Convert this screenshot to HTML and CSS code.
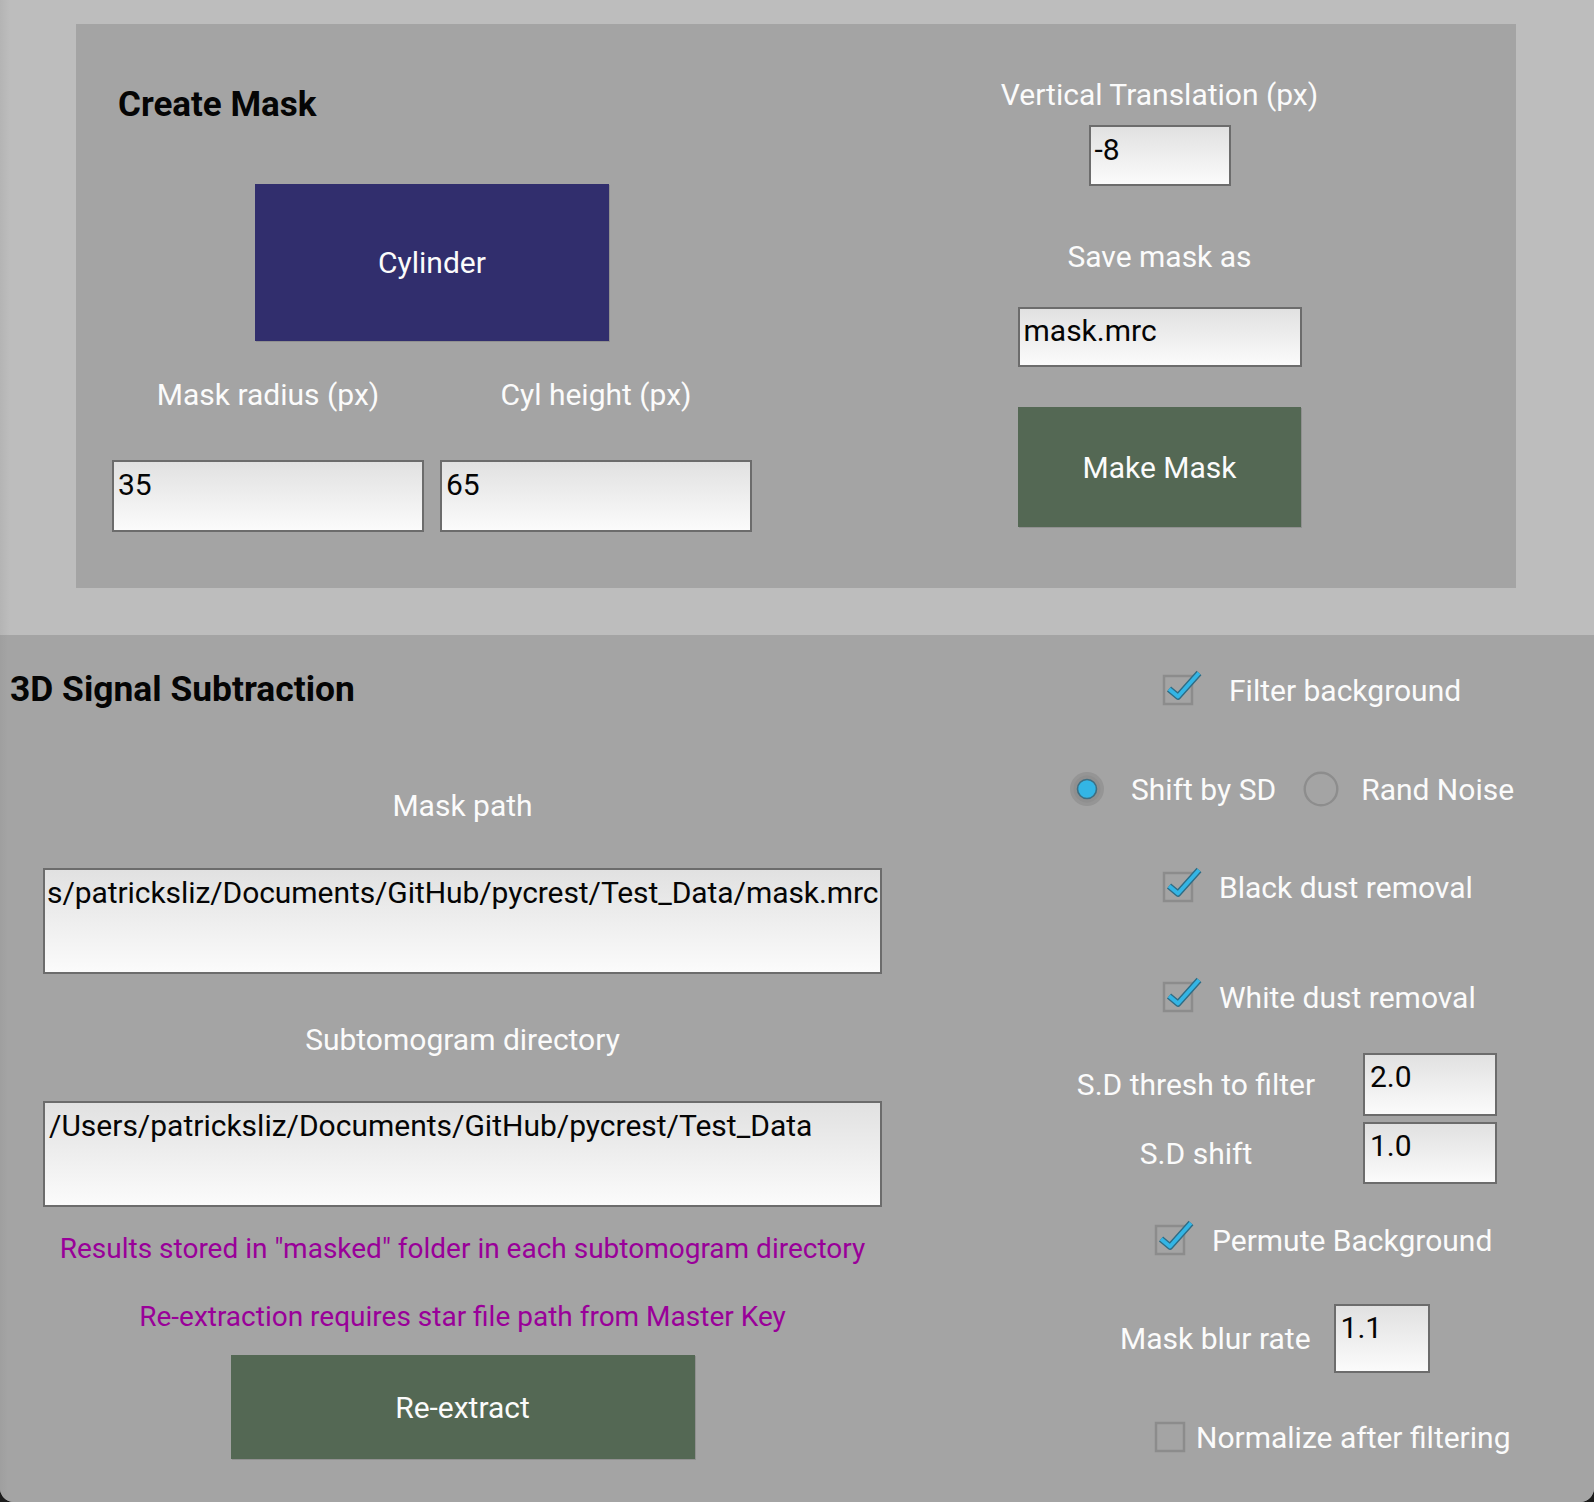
FILE: index.html
```html
<!DOCTYPE html>
<html lang="en">
<head>
<meta charset="utf-8">
<title>Create Mask / 3D Signal Subtraction</title>
<link rel="stylesheet" href="styles.css">
</head>
<body>
<div class="app">
  <section class="top">
    <div class="panel">
      <div class="mask-left">
        <h2 class="title title-mask">Create Mask</h2>
        <div class="btn btn-cyl">Cylinder</div>
        <div class="pair">
          <div class="field">
            <div class="label">Mask radius (px)</div>
            <div class="tin tin-pair">35</div>
          </div>
          <div class="field">
            <div class="label">Cyl height (px)</div>
            <div class="tin tin-pair">65</div>
          </div>
        </div>
      </div>
      <div class="mask-right">
        <div class="label label-vt">Vertical Translation (px)</div>
        <div class="tin tin-vt">-8</div>
        <div class="label label-save">Save mask as</div>
        <div class="tin tin-save">mask.mrc</div>
        <div class="btn btn-make">Make Mask</div>
      </div>
    </div>
  </section>

  <section class="sub">
    <div class="sub-left">
      <h2 class="title title-sub">3D Signal Subtraction</h2>
      <div class="sub-fields">
        <div class="label label-path">Mask path</div>
        <div class="tin tin-wide tin-path">s/patricksliz/Documents/GitHub/pycrest/Test_Data/mask.mrc</div>
        <div class="label label-dir">Subtomogram directory</div>
        <div class="tin tin-wide tin-dir">/Users/patricksliz/Documents/GitHub/pycrest/Test_Data</div>
        <div class="note note-1">Results stored in "masked" folder in each subtomogram directory</div>
        <div class="note note-2">Re-extraction requires star file path from Master Key</div>
        <div class="btn btn-re">Re-extract</div>
      </div>
    </div>

    <div class="sub-right">
      <div class="row row-1">
        <svg class="cb cb-a" width="40" height="38" viewBox="0 0 40 38"><rect x="2" y="8" width="28" height="28" fill="none" stroke="#8c8c8c" stroke-width="2.5"/><path d="M7 21 L16 28.5 L37 5" fill="none" stroke="#2f6c84" stroke-width="6.5" stroke-linejoin="round"/><path d="M7 21 L16 28.5 L37 5" fill="none" stroke="#33b5e5" stroke-width="3.8" stroke-linejoin="round"/></svg>
        <span class="label">Filter background</span>
      </div>
      <div class="row row-2">
        <svg class="radio radio-on" width="36" height="36" viewBox="0 0 36 36"><circle cx="18" cy="18" r="17" fill="#959595"/><circle cx="18" cy="18" r="13.5" fill="#8f8f8f"/><circle cx="18" cy="18" r="9.5" fill="#33b5e5" stroke="#3d6e82" stroke-width="1.6"/></svg>
        <span class="label opt-1">Shift by SD</span>
        <svg class="radio radio-off" width="36" height="36" viewBox="0 0 36 36"><circle cx="18" cy="18" r="16.3" fill="none" stroke="#8d8d8d" stroke-width="2.4"/></svg>
        <span class="label opt-2">Rand Noise</span>
      </div>
      <div class="row row-3">
        <svg class="cb cb-b" width="40" height="38" viewBox="0 0 40 38"><rect x="2" y="8" width="28" height="28" fill="none" stroke="#8c8c8c" stroke-width="2.5"/><path d="M7 21 L16 28.5 L37 5" fill="none" stroke="#2f6c84" stroke-width="6.5" stroke-linejoin="round"/><path d="M7 21 L16 28.5 L37 5" fill="none" stroke="#33b5e5" stroke-width="3.8" stroke-linejoin="round"/></svg>
        <span class="label">Black dust removal</span>
      </div>
      <div class="row row-4">
        <svg class="cb cb-b" width="40" height="38" viewBox="0 0 40 38"><rect x="2" y="8" width="28" height="28" fill="none" stroke="#8c8c8c" stroke-width="2.5"/><path d="M7 21 L16 28.5 L37 5" fill="none" stroke="#2f6c84" stroke-width="6.5" stroke-linejoin="round"/><path d="M7 21 L16 28.5 L37 5" fill="none" stroke="#33b5e5" stroke-width="3.8" stroke-linejoin="round"/></svg>
        <span class="label">White dust removal</span>
      </div>
      <div class="row row-5">
        <span class="label label-num">S.D thresh to filter</span>
        <div class="tin tin-num">2.0</div>
      </div>
      <div class="row row-6">
        <span class="label label-num">S.D shift</span>
        <div class="tin tin-num tin-num-b">1.0</div>
      </div>
      <div class="row row-7">
        <svg class="cb cb-c" width="40" height="38" viewBox="0 0 40 38"><rect x="2" y="8" width="28" height="28" fill="none" stroke="#8c8c8c" stroke-width="2.5"/><path d="M7 21 L16 28.5 L37 5" fill="none" stroke="#2f6c84" stroke-width="6.5" stroke-linejoin="round"/><path d="M7 21 L16 28.5 L37 5" fill="none" stroke="#33b5e5" stroke-width="3.8" stroke-linejoin="round"/></svg>
        <span class="label">Permute Background</span>
      </div>
      <div class="row row-8">
        <span class="label label-blur">Mask blur rate</span>
        <div class="tin tin-blur">1.1</div>
      </div>
      <div class="row row-9">
        <svg class="cb cb-d" width="40" height="38" viewBox="0 0 40 38"><rect x="2" y="8" width="28" height="28" fill="none" stroke="#8c8c8c" stroke-width="2.5"/></svg>
        <span class="label">Normalize after filtering</span>
      </div>
    </div>
  </section>
</div>
</body>
</html>
```

FILE: styles.css
```css
* { box-sizing: border-box; }

html, body {
  margin: 0;
  padding: 0;
  background: #1c1c1c;
}

body {
  font-family: "Roboto", "Liberation Sans", sans-serif;
  width: 1594px;
  height: 1502px;
  overflow: hidden;
}

.app {
  width: 1594px;
  height: 1502px;
  border-radius: 0 0 14px 14px;
  overflow: hidden;
  background: #a4a4a4;
}

.label {
  font-size: 30px;
  line-height: 35px;
  color: #fbfbfb;
  white-space: nowrap;
}

.title {
  margin: 0;
  font-size: 35px;
  line-height: 41px;
  font-weight: 700;
  color: #050505;
  white-space: nowrap;
}

.tin {
  background: linear-gradient(to bottom, #e1e1e1 0%, #fbfbfb 100%);
  border: 2px solid #6c6c6c;
  color: #050505;
  font-size: 30px;
  line-height: 35px;
  padding: 3px 4px 0 4px;
  white-space: nowrap;
  overflow: hidden;
}

.btn {
  display: flex;
  align-items: center;
  justify-content: center;
  color: #fbfbfb;
  font-size: 30px;
  box-shadow: 1px 1px 0 rgba(0, 0, 0, 0.12);
}

/* ---------- Top: Create Mask ---------- */
.top {
  height: 635px;
  padding: 24px 0 0 76px;
  background: linear-gradient(to right, #b4b4b4 0px, #bdbdbd 10px, #bdbdbd 100%);
}

.panel {
  width: 1440px;
  height: 564px;
  background: #a4a4a4;
  display: flex;
}

.mask-left {
  width: 800px;
  padding-left: 36px;
  display: flex;
  flex-direction: column;
}

.title-mask {
  margin-top: 60px;
  padding-left: 6px;
}

.btn-cyl {
  width: 354px;
  height: 157px;
  margin-top: 59px;
  margin-left: 143px;
  background: #312e6d;
}

.pair {
  display: flex;
  gap: 16px;
  margin-top: 36px;
}

.field {
  width: 312px;
  display: flex;
  flex-direction: column;
}

.field .label {
  text-align: center;
}

.tin-pair {
  height: 72px;
  margin-top: 48px;
  padding-top: 5px;
}

.mask-right {
  width: 567px;
  display: flex;
  flex-direction: column;
  align-items: center;
}

.label-vt { margin-top: 53px; }

.tin-vt {
  width: 142px;
  height: 61px;
  margin-top: 13px;
  padding-top: 5px;
  padding-left: 4px;
}

.label-save { margin-top: 53px; }

.tin-save {
  width: 284px;
  height: 60px;
  margin-top: 33px;
  padding-top: 4px;
}

.btn-make {
  width: 283px;
  height: 120px;
  margin-top: 40px;
  background: #546854;
}

/* ---------- Bottom: 3D Signal Subtraction ---------- */
.sub {
  height: 867px;
  display: flex;
  background: linear-gradient(to right, #9f9f9f 0px, #a4a4a4 8px, #a4a4a4 100%);
}

.sub-left {
  width: 1040px;
  padding-left: 10px;
  display: flex;
  flex-direction: column;
}

.title-sub {
  margin-top: 34px;
  font-size: 35.4px;
}

.sub-fields {
  width: 839px;
  margin-left: 33px;
  display: flex;
  flex-direction: column;
  align-items: center;
}

.label-path { margin-top: 78px; }

.tin-wide {
  width: 839px;
  height: 106px;
  padding-top: 5px;
}

.tin-path {
  margin-top: 45px;
  padding-left: 2px;
  letter-spacing: -0.07px;
}

.label-dir { margin-top: 48px; }

.tin-dir { margin-top: 44px; padding-left: 4px; }

.note {
  font-size: 28px;
  line-height: 33px;
  color: #990099;
  white-space: nowrap;
}

.note-1 { margin-top: 25px; }
.note-2 { margin-top: 35px; }

.btn-re {
  width: 464px;
  height: 104px;
  margin-top: 22px;
  background: #546854;
}

.sub-right {
  flex: 1;
  display: flex;
  flex-direction: column;
}

.row {
  display: flex;
  align-items: center;
  height: 40px;
}

.cb { flex: none; margin-top: -6px; }
.radio { flex: none; }

.row-1 { margin-top: 35px; }
.row-1 .cb { margin-left: 122px; margin-right: 27px; }

.row-2 { margin-top: 59px; }
.radio-on { margin-left: 29px; margin-right: 26px; }
.opt-1 { margin-right: 27px; }
.radio-off { margin-right: 22px; }

.row-3 { margin-top: 58px; }
.row-4 { margin-top: 70px; }
.cb-b { margin-left: 122px; margin-right: 17px; }

.row-5 { margin-top: 36px; height: 63px; }
.row-6 { margin-top: 6px; height: 62px; }

.label-num {
  width: 312px;
  text-align: center;
}

.tin-num {
  width: 134px;
  height: 63px;
  margin-left: 11px;
  padding-top: 4px;
  padding-left: 5px;
}

.tin-num-b { height: 62px; }

.row-7 { margin-top: 36px; }
.cb-c { margin-left: 114px; margin-right: 18px; }

.row-8 { margin-top: 44px; height: 69px; }

.label-blur { margin-left: 80px; }

.tin-blur {
  width: 96px;
  height: 69px;
  margin-left: 23px;
  padding-top: 4px;
  padding-left: 5px;
}

.row-9 { margin-top: 44px; }
.cb-d { margin-left: 114px; margin-right: 2px; }
```
